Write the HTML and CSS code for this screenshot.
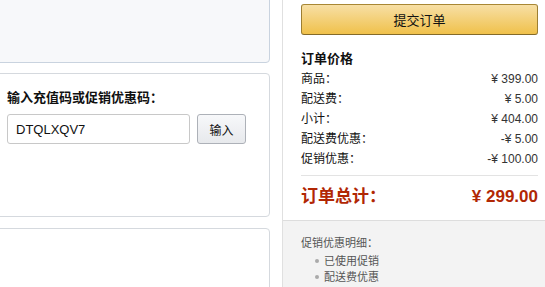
FILE: index.html
```html
<!DOCTYPE html>
<html lang="zh-CN">
<head>
  <meta charset="UTF-8">
  <title>结算</title>
  <link rel="stylesheet" href="styles.css">
</head>
<body>
  <div class="page">
    <div class="main">
      <div class="box box-top"></div>
      <div class="box box-code">
        <div class="code-title">输入充值码或促销优惠码：</div>
        <div class="code-row">
          <input class="code-input" type="text" value="DTQLXQV7">
          <button class="code-button">输入</button>
        </div>
      </div>
      <div class="box box-bottom"></div>
    </div>

    <div class="summary">
      <div class="summary-body">
        <button class="submit-button">提交订单</button>
        <div class="summary-title">订单价格</div>
        <div class="lines">
          <div class="line"><span>商品：</span><span>¥ 399.00</span></div>
          <div class="line"><span>配送费：</span><span>¥ 5.00</span></div>
          <div class="line"><span>小计：</span><span>¥ 404.00</span></div>
          <div class="line"><span>配送费优惠：</span><span>-¥ 5.00</span></div>
          <div class="line"><span>促销优惠：</span><span>-¥ 100.00</span></div>
        </div>
        <div class="total"><span>订单总计：</span><span>¥ 299.00</span></div>
      </div>
      <div class="promo">
        <div class="promo-title">促销优惠明细：</div>
        <ul class="promo-list">
          <li>已使用促销</li>
          <li>配送费优惠</li>
        </ul>
      </div>
    </div>
  </div>
</body>
</html>
```

FILE: styles.css
```css
body {
  margin: 0;
  background: #fff;
  font-family: "Liberation Sans", Arial, "Noto Sans CJK SC", sans-serif;
  color: #333;
  font-size: 12px;
}

.page {
  display: flex;
  align-items: stretch;
  height: 100vh;
  overflow: hidden;
}

.main {
  width: 280px;
  margin-left: -10px;
  flex-shrink: 0;
}

.box {
  border: 1px solid #d5d9de;
  border-radius: 4px;
  background: #fff;
}

.box-top {
  height: 80px;
  margin-top: -19px;
  background: #f7f8fa;
  border-color: #c9d3df;
}

.box-code {
  margin-top: 10px;
  height: 144px;
  padding: 16px 16px 0;
  box-sizing: border-box;
}

.code-title {
  font-weight: bold;
  font-size: 13px;
  line-height: 16px;
  color: #111;
}

.code-row {
  display: flex;
  gap: 7px;
  margin-top: 8px;
}

.code-input {
  width: 183px;
  height: 30px;
  box-sizing: border-box;
  border: 1px solid #c8c8c8;
  border-radius: 3px;
  padding: 0 8px;
  font-family: "Liberation Sans", Arial, sans-serif;
  font-size: 13px;
  color: #111;
}

.code-button {
  width: 49px;
  height: 30px;
  border: 1px solid #adb1b8;
  border-radius: 3px;
  background: linear-gradient(180deg, #f7f8fa 0%, #e7e9ec 100%);
  font-family: "Noto Sans CJK SC", sans-serif;
  font-size: 12px;
  color: #111;
}

.box-bottom {
  margin-top: 11px;
  height: 80px;
}

.summary {
  flex: 1;
  display: flex;
  flex-direction: column;
  margin-left: 12px;
  border-left: 1px solid #e0e0e0;
}

.summary-body {
  padding: 4px 7px 0 18px;
}

.submit-button {
  display: block;
  width: 100%;
  height: 31px;
  border: 1px solid;
  border-color: #a88734 #9c7e31 #846a29;
  border-radius: 3px;
  background: linear-gradient(180deg, #f7dfa5 0%, #f0c14b 100%);
  font-family: "Noto Sans CJK SC", sans-serif;
  font-size: 13px;
  color: #111;
}

.summary-title {
  margin-top: 16px;
  font-weight: bold;
  font-size: 13px;
  line-height: 16px;
  color: #111;
}

.lines {
  margin-top: 2px;
}

.line {
  display: flex;
  justify-content: space-between;
  line-height: 20px;
  color: #111;
}

.line span:last-child {
  color: #333;
}

.total {
  display: flex;
  justify-content: space-between;
  margin-top: 6px;
  border-top: 1px solid #e3e3e3;
  padding: 9px 0 11px;
  font-size: 17px;
  line-height: 24px;
  font-weight: bold;
  color: #b12704;
}

.promo {
  flex: 1;
  border-top: 1px solid #dddddd;
  background: #f3f3f3;
  padding: 14px 7px 0 18px;
  font-size: 11px;
  color: #555;
}

.promo-title {
  line-height: 16px;
}

.promo-list {
  margin: 2px 0 0;
  padding-left: 23px;
  list-style: none;
}

.promo-list li {
  position: relative;
  line-height: 16px;
}

.promo-list li::before {
  content: "";
  position: absolute;
  left: -9px;
  top: 6px;
  width: 4px;
  height: 4px;
  border-radius: 50%;
  background: #aaa;
}
```
